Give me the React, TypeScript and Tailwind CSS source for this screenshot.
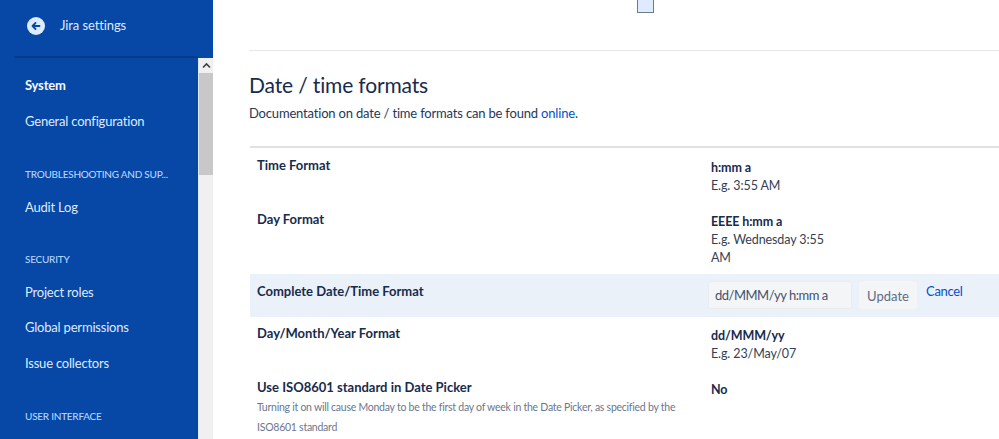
import React from 'react';

const FONT = "font-['Lato','Open_Sans',sans-serif]";

function NavItem({ label, active, h = 'h-[36px]' }: { label: string; active?: boolean; h?: string }) {
  return (
    <div className={`${h} flex items-center pl-[25px] text-[13px] tracking-[-0.2px] whitespace-nowrap ${active ? 'font-bold text-[#f4f7fc]' : 'text-[#deebff]'}`}>
      {label}
    </div>
  );
}

function NavHeading({ label }: { label: string }) {
  return (
    <div className="h-[20px] flex items-center pl-[25px] text-[10px] tracking-[-0.25px] font-medium text-[#b3d4ff] whitespace-nowrap">
      {label}
    </div>
  );
}

function Sidebar() {
  return (
    <aside className="w-[213px] h-full bg-[#0747a6] flex flex-col shrink-0 overflow-hidden">
      <div className="h-[58px] shrink-0 ml-[14px] mr-[15px] border-b-2 border-[#063a8a] flex items-center pl-[13px] pb-[5px] gap-[15px]">
        <span className="w-[18px] h-[18px] rounded-full bg-[#deebff] flex items-center justify-center">
          <svg width="12" height="12" viewBox="0 0 12 12" fill="none" stroke="#0747a6" strokeWidth="1.8" strokeLinecap="round" strokeLinejoin="round">
            <path d="M9.5 6H2.5M5.5 3L2.5 6L5.5 9" />
          </svg>
        </span>
        <span className="text-[13px] tracking-[-0.1px] text-[#deebff]">Jira settings</span>
      </div>
      <div className="flex flex-1 min-h-0">
        <nav className="flex-1 pt-[10px]">
          <NavItem label="System" active />
          <NavItem label="General configuration" />
          <div className="mt-[24px]"><NavHeading label="TROUBLESHOOTING AND SUP..." /></div>
          <div className="mt-[6px]"><NavItem label="Audit Log" /></div>
          <div className="mt-[23px]"><NavHeading label="SECURITY" /></div>
          <div className="mt-[6px]"><NavItem label="Project roles" h="h-[35px]" /></div>
          <NavItem label="Global permissions" />
          <NavItem label="Issue collectors" />
          <div className="mt-[24px]"><NavHeading label="USER INTERFACE" /></div>
        </nav>
        <div className="w-[15px] shrink-0 bg-[#f0f0f0] border-l border-[#dfe6f2] flex flex-col">
          <div className="h-[15px] flex items-center justify-center bg-[#f0f0f0]">
            <svg width="9" height="7" viewBox="0 0 9 7" fill="none" stroke="#404040" strokeWidth="1.6">
              <path d="M1 5.5L4.5 2L8 5.5" />
            </svg>
          </div>
          <div className="h-[102px] bg-[#c8c8c8]" />
        </div>
      </div>
    </aside>
  );
}

function Row({
  label,
  value,
  example,
  note,
}: {
  label: string;
  value: string;
  example?: React.ReactNode;
  note?: string;
}) {
  return (
    <div className="flex px-[7px] text-[13px] text-[#172b4d]">
      <div className="w-[454px] shrink-0">
        <div className="font-bold leading-[20px]">{label}</div>
        {note && <div className="text-[10.5px] tracking-[-0.25px] leading-[20px] text-[#6b778c] w-[425px]">{note}</div>}
      </div>
      <div className="w-[125px] pt-[4px] text-[12.5px] tracking-[-0.1px]">
        <div className="font-bold leading-[18px]">{value}</div>
        {example && <div className="leading-[18px] text-[#333f55]">{example}</div>}
      </div>
    </div>
  );
}

export default function App() {
  return (
    <div className={`w-[999px] h-[439px] flex overflow-hidden bg-white ${FONT}`}>
      <Sidebar />
      <main className="flex-1 min-w-0 pl-[36px] relative">
        <div className="absolute left-[424px] top-0 w-[17px] h-[13px] bg-[#deebff] border border-t-0 border-[#6f7a86]" />
        <div className="h-[51px] border-b border-[#e8e8e8]" />
        <h1 className="mt-[19px] text-[21px] tracking-[-0.15px] leading-[30px] text-[#172b4d]">Date / time formats</h1>
        <p className="mt-[3px] text-[13px] tracking-[-0.18px] leading-[20px] text-[#253858]">
          Documentation on date / time formats can be found <span className="text-[#0052cc]">online</span>.
        </p>
        <div className="mt-[23px] ml-px border-t-2 border-[#dfe1e6] pt-[7px]">
          <Row label="Time Format" value="h:mm a" example="E.g. 3:55 AM" />
          <div className="mt-[14px]">
            <Row label="Day Format" value="EEEE h:mm a" example={<>E.g. Wednesday 3:55<br />AM</>} />
          </div>
          <div className="mt-[7px] h-[43px] bg-[#eaf1f9] flex px-[7px] text-[13px]">
            <div className="w-[451px] shrink-0 pt-[7px] font-bold leading-[20px] text-[#172b4d]">Complete Date/Time Format</div>
            <div className="flex items-start pt-[7px]">
              <div className="w-[144px] h-[28px] rounded-[3px] bg-[#f4f5f7] border border-[#ebecf0] pl-[6px] pt-[1px] flex items-center tracking-[-0.5px] text-[#42526e] whitespace-nowrap">
                dd/MMM/yy h:mm a
              </div>
              <div className="ml-[7px] w-[58px] h-[28px] rounded-[3px] bg-[#f4f5f7] pt-[3px] flex items-center justify-center text-[#5e6c84]">
                Update
              </div>
              <span className="ml-[9px] leading-[20px] tracking-[-0.3px] text-[#0052cc]">Cancel</span>
            </div>
          </div>
          <div className="mt-[6px]">
            <Row label="Day/Month/Year Format" value="dd/MMM/yy" example="E.g. 23/May/07" />
          </div>
          <div className="mt-[14px]">
            <Row
              label="Use ISO8601 standard in Date Picker"
              value="No"
              note="Turning it on will cause Monday to be the first day of week in the Date Picker, as specified by the ISO8601 standard"
            />
          </div>
        </div>
      </main>
    </div>
  );
}
